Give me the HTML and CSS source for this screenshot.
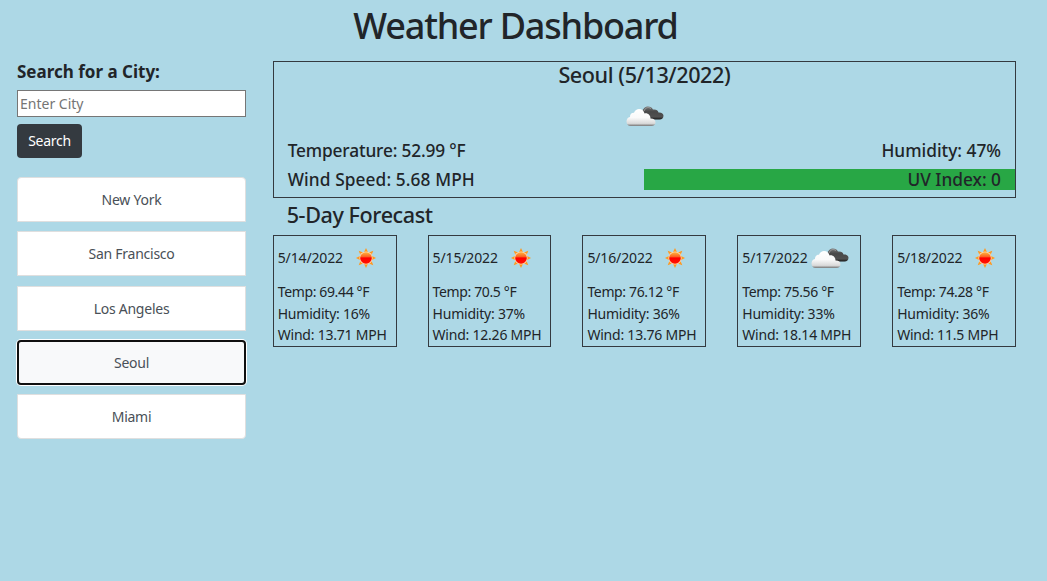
FILE: index.html
```html
<!DOCTYPE html>
<html lang="en">
<head>
<meta charset="utf-8">
<title>Weather Dashboard</title>
<link rel="stylesheet" href="styles.css">
</head>
<body>
<svg class="defs" width="0" height="0" aria-hidden="true">
  <defs>
    <linearGradient id="cloud-fill" x1="0" y1="0" x2="0" y2="1"><stop offset="0" stop-color="#fff"/><stop offset=".5" stop-color="#fafafa"/><stop offset=".85" stop-color="#d9d9d9"/><stop offset="1" stop-color="#777"/></linearGradient>
    <linearGradient id="dark-fill" x1="0" y1="0" x2="0" y2="1"><stop offset="0" stop-color="#777"/><stop offset=".4" stop-color="#484848"/><stop offset=".8" stop-color="#505050"/><stop offset="1" stop-color="#151515"/></linearGradient>
    <linearGradient id="sun-fill" x1="0" y1="0" x2="0" y2="1"><stop offset="0" stop-color="#ffb53d"/><stop offset=".38" stop-color="#fa6422"/><stop offset=".5" stop-color="#f00"/><stop offset="1" stop-color="#ff1200"/></linearGradient>
    <symbol id="clouds" viewBox="0 0 38 21">
      <path d="M16 8C16 3 19 .5 22 .5c2.500 0 4 1.200 5 3 3-.5 5 .8 5.500 3 3-.3 5 1.200 5 3.200 0 2.300-1.500 3.800-4 3.800H23z" fill="url(#dark-fill)"/>
      <path d="M18 5c1-3 4-4.500 7-2.500" fill="none" stroke="#aaa" stroke-width=".8"/>
      <path d="M4.500 20C2 20 .5 18 .5 15.500c0-2.300 1.300-4 3.500-4.500-.3-3 2-4.500 4-4.300C9 4.200 11 3 13 3c3 0 5 2 5.500 4.500 3-.8 6 1.500 6 5 3-.2 5 1.500 5 3.800 0 2.200-1.500 3.700-4 3.700z" fill="url(#cloud-fill)"/>
    </symbol>
    <symbol id="sun" viewBox="0 0 20 20">
      <path d="M10 0l1.900 4H8.100zM10 20l1.900-4H8.100zM0 10l4-1.900v3.800zM20 10l-4-1.900v3.800zM2.700 2.700l4.400 1.700-2.700 2.700zM17.300 2.700l-1.700 4.400-2.700-2.700zM2.700 17.300l1.700-4.400 2.700 2.700zM17.300 17.300l-4.400-1.700 2.700-2.700z" fill="#ff981f"/>
      <circle cx="10" cy="10" r="6.600" fill="#fbd6b0"/>
      <circle cx="10" cy="10" r="5.800" fill="url(#sun-fill)"/>
    </symbol>
  </defs>
</svg>
<h1 class="title">Weather Dashboard</h1>
<div class="layout">
  <aside class="sidebar">
    <label class="label" for="city">Search for a City:</label>
    <input class="city-input" id="city" type="text" placeholder="Enter City">
    <button class="search-btn">Search</button>
    <div class="history">
      <button class="city">New York</button>
      <button class="city">San Francisco</button>
      <button class="city">Los Angeles</button>
      <button class="city active">Seoul</button>
      <button class="city">Miami</button>
    </div>
  </aside>
  <main class="main">
    <section class="current">
      <h2 class="heading place">Seoul (5/13/2022)</h2>
      <svg class="clouds"><use href="#clouds"/></svg>
      <div class="stats">
        <span class="stat temp">Temperature: 52.99 °F</span>
        <span class="stat right humid">Humidity: 47%</span>
        <span class="stat speed">Wind Speed: 5.68 MPH</span>
        <span class="stat right uv">UV Index: 0</span>
      </div>
    </section>
    <h2 class="heading five">5-Day Forecast</h2>
    <section class="forecast">
      <article class="day"><div class="date"><span>5/14/2022</span><svg class="sun"><use href="#sun"/></svg></div><p class="degrees">Temp: 69.44 °F</p><p>Humidity: 16%</p><p>Wind: 13.71 MPH</p></article>
      <article class="day"><div class="date"><span>5/15/2022</span><svg class="sun"><use href="#sun"/></svg></div><p class="degrees">Temp: 70.5 °F</p><p>Humidity: 37%</p><p>Wind: 12.26 MPH</p></article>
      <article class="day"><div class="date"><span>5/16/2022</span><svg class="sun"><use href="#sun"/></svg></div><p class="degrees">Temp: 76.12 °F</p><p>Humidity: 36%</p><p>Wind: 13.76 MPH</p></article>
      <article class="day"><div class="date"><span>5/17/2022</span><svg class="clouds"><use href="#clouds"/></svg></div><p class="degrees">Temp: 75.56 °F</p><p>Humidity: 33%</p><p>Wind: 18.14 MPH</p></article>
      <article class="day"><div class="date"><span>5/18/2022</span><svg class="sun"><use href="#sun"/></svg></div><p class="degrees">Temp: 74.28 °F</p><p>Humidity: 36%</p><p>Wind: 11.5 MPH</p></article>
    </section>
  </main>
</div>
</body>
</html>
```
FILE: styles.css
```css
* { box-sizing: border-box; }
body {
  margin: 0;
  background: #add8e6;
  color: #212529;
  font-family: "Segoe UI", "Noto Sans", sans-serif;
  font-size: 14px;
}
h1, h2, p { margin: 0; }
svg { display: block; }
.defs { position: absolute; }
.title {
  height: 61px;
  padding-right: 16px;
  font-size: 36px;
  font-weight: 500;
  line-height: 52px;
  letter-spacing: -1.200px;
  text-align: center;
}
.layout { display: flex; gap: 26.700px; padding: 0 31px 0 17px; }
.sidebar { width: 229px; display: flex; flex-direction: column; align-items: flex-start; }
.label { height: 29px; font-size: 17px; font-weight: 700; line-height: 21px; }
.city-input {
  width: 100%;
  height: 27px;
  padding: 0 2px 1px;
  border: 1px solid #767676;
  border-radius: 0;
  font: inherit;
}
.city-input::placeholder { color: #757575; }
.search-btn {
  width: 65px;
  height: 34px;
  margin: 7px 0 19.400px;
  padding: 0 0 2px;
  border: 0;
  border-radius: 4px;
  background: #343a40;
  color: #fff;
  font: inherit;
  letter-spacing: -.3px;
}
.history { width: 100%; display: flex; flex-direction: column; gap: 9.100px; }
.city {
  height: 45px;
  padding: 0;
  border: 1px solid #dfdfdf;
  background: #fff;
  color: #495057;
  font: inherit;
  letter-spacing: -.25px;
}
.city:first-child { border-radius: 4px 4px 0 0; }
.city:last-child { border-radius: 0 0 4px 4px; }
.city.active {
  border: 2px solid #101010;
  border-radius: 4px;
  background: #f8f9fa;
  box-shadow: 0 0 0 1px #fff;
}
.main { flex: 1; min-width: 0; }
.current { height: 137px; border: 1px solid #343a40; }
.heading { font-size: 21.600px; font-weight: 500; line-height: 26px; letter-spacing: -.42px; }
.place { text-align: center; }
.clouds { width: 38px; height: 21px; }
.current .clouds { margin: 18px auto 13px 352px; }
.stats { display: grid; grid-template-columns: 1fr 1fr; row-gap: 8px; }
.stat { height: 21px; padding: 0 14px; font-size: 17.300px; font-weight: 500; line-height: 21px; }
.temp { letter-spacing: -.15px; }
.speed { letter-spacing: .1px; }
.right { text-align: right; }
.uv { background: #28a745; }
.five { height: 37px; padding: 4px 0 0 14px; }
.forecast { display: grid; grid-template-columns: repeat(5, 1fr); gap: 31px; }
.day {
  height: 112px;
  padding-left: 4px;
  border: 1px solid #343a40;
  white-space: nowrap;
  line-height: 21.600px;
  letter-spacing: -.22px;
}
.degrees { letter-spacing: -.36px; }
.date { height: 45px; display: flex; align-items: center; padding-bottom: 2px; letter-spacing: -.13px; }
.date span { width: 69px; }
.date svg { flex: none; margin-top: 1px; }
.date .sun { width: 20px; height: 20px; margin-left: 9px; }
```
